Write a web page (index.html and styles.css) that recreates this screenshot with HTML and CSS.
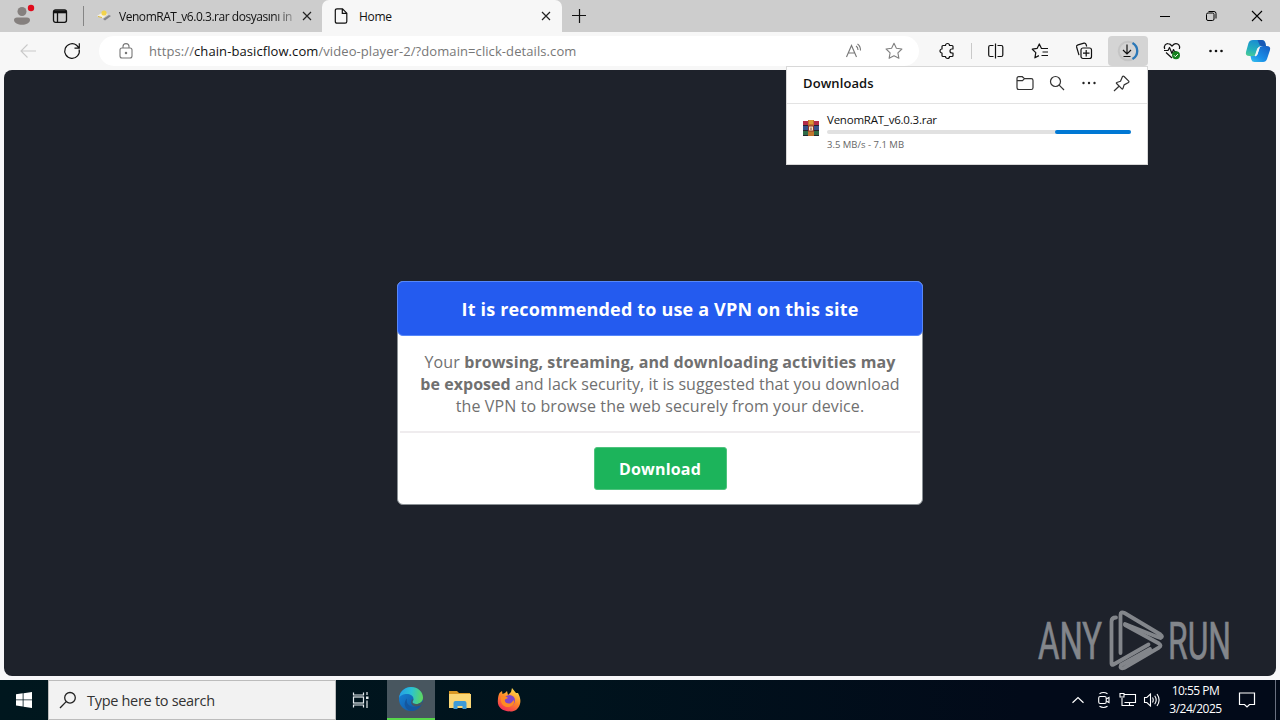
FILE: index.html
```html
<!DOCTYPE html>
<html lang="en">
  <head>
    <meta charset="UTF-8" />
    <meta name="viewport" content="width=device-width, initial-scale=1.0" />
    <title>Home</title>
    <link rel="stylesheet" href="styles.css">
  </head>
  <body>
    <!-- Browser tabs -->
    <div class="tab-bar">
      <div class="profile">
        <svg width="26" height="26" viewBox="0 0 26 26">
          <circle cx="13" cy="8.500" r="4.500" fill="#85807e" />
          <path d="M5 17q0-2.500 3-2.500h10q3 0 3 2.500c0 3-4 4.800-8 4.800S5 20 5 17z" fill="#85807e" />
          <circle cx="22" cy="5" r="3.200" fill="#e00b1c" />
        </svg>
      </div>
      <div class="workspaces">
        <svg width="16" height="16" viewBox="0 0 16 16" fill="none" stroke="#111" stroke-width="1.300">
          <rect x="1.500" y="1.800" width="13" height="12.500" rx="2" />
          <path d="M2 3.800h12" stroke-width="3" />
          <path d="M5.500 4v10" />
        </svg>
      </div>
      <div class="tab">
        <svg class="favicon" width="14" height="14" viewBox="0 0 14 14">
          <path d="M0 7l6-4 5 2-5 4z" fill="#f4f1e6" />
          <circle cx="7" cy="4" r="2.600" fill="#f2d34c" />
          <path d="M6 10l6-4 2 1-6 4.500z" fill="#85858c" />
          <path d="M1 7.500l4 1" stroke="#dcb93c" />
        </svg>
        <span class="tab-title fade">VenomRAT_v6.0.3.rar dosyasını in</span>
        <svg class="close" width="10" height="10" viewBox="0 0 10 10"><path d="M1 1l8 8M9 1L1 9" stroke="#222" stroke-width="1.200" /></svg>
      </div>
      <div class="tab active">
        <svg class="favicon" width="14" height="16" viewBox="0 0 14 16" fill="none" stroke="#111" stroke-width="1.200">
          <path d="M3 .8h5.500l4.300 4.400v8.300q0 1.700-1.700 1.700H3q-1.700 0-1.700-1.700v-11Q1.300.8 3 .8zM8.300 1v4.400h4.400" />
        </svg>
        <span class="tab-title home">Home</span>
        <svg class="close" width="10" height="10" viewBox="0 0 10 10"><path d="M1 1l8 8M9 1L1 9" stroke="#222" stroke-width="1.200" /></svg>
      </div>
      <svg class="new-tab" width="14" height="14" viewBox="0 0 14 14"><path d="M0 6.500h14M7.500 0v14" stroke="#111" stroke-width="1.200" /></svg>
      <div class="window-controls">
        <span><svg width="12" height="12" viewBox="0 0 12 12"><path d="M1 6.500h10" stroke="#000" /></svg></span>
        <span><svg width="12" height="12" viewBox="0 0 12 12" fill="none" stroke="#000"><rect x="1.500" y="3" width="7.500" height="7.500" rx="1.500" /><path d="M3.500 1.500H9q2 0 2 2v5" /></svg></span>
        <span><svg width="12" height="12" viewBox="0 0 12 12"><path d="M1 1l10 10M11 1L1 11" stroke="#000" stroke-width="1.100" /></svg></span>
      </div>
    </div>

    <!-- Address bar and toolbar buttons -->
    <div class="toolbar">
      <div class="nav-btn back"><svg width="16" height="14" viewBox="0 0 16 14" fill="none" stroke="#c9c9c9" stroke-width="1.100"><path d="M16 7H1M7.500.5L1 7l6.500 6.500" /></svg></div>
      <div class="nav-btn"><svg width="18" height="18" viewBox="0 0 18 18" fill="none" stroke="#111" stroke-width="1.200"><path d="M16.200 7.500A7.300 7.300 0 1 1 13.600 3.300L16 5.800M16.300 1.300v4.800h-4.800" /></svg></div>
      <div class="address">
        <svg class="lock" width="14" height="16" viewBox="0 0 14 16" fill="none" stroke="#777" stroke-width="1.100"><rect x="1" y="5" width="12" height="10" rx="2" /><path d="M4 5V3.600a3 3 0 0 1 6 0V5" /><circle cx="7" cy="10" r=".7" fill="#666" /></svg>
        <span class="url">https://<b>chain-basicflow.com</b>/video-player-2/?domain=click-details.com</span>
        <svg class="read" width="18" height="16" viewBox="0 0 18 16" fill="none" stroke="#777" stroke-width="1.100"><path d="M2.500 14L7.500 2.500 12.500 14M4.200 10h6.600M12 3q2 1.200 2 4M13.500 1q3 2 3 6.500" /></svg>
        <svg class="star" width="18" height="18" viewBox="0 0 18 18" fill="none" stroke="#808080" stroke-width="1.100" stroke-linejoin="round"><path d="M9 1.200l2.400 5 5.500.8-4 3.800 1 5.500L9 13.700l-4.900 2.600 1-5.500-4-3.800 5.500-.8z" /></svg>
      </div>
      <div class="tool ext"><svg width="18" height="18" viewBox="0 0 18 18" fill="none" stroke="#111" stroke-width="1.200" stroke-linejoin="round"><path d="M5 3.500h2.500a2 2 0 0 1 4 0H14q1 0 1 1V7h-1a2 2 0 0 0 0 4h1v2.500q0 1-1 1h-2.500a2 2 0 0 1-4 0H5q-1 0-1-1V11a2 2 0 0 1 0-4V4.500q0-1 1-1z" /></svg></div>
      <div class="separator"></div>
      <div class="tool"><svg width="18" height="16" viewBox="0 0 18 16" fill="none" stroke="#111" stroke-width="1.200"><path d="M6.500 2.500H3.200Q1.700 2.500 1.700 4v8q0 1.500 1.500 1.500h3.300M10.500 2.500h3.800q1.500 0 1.500 1.500v8q0 1.500-1.500 1.500h-3.800M8.500 .5v15" /></svg></div>
      <div class="tool"><svg width="18" height="18" viewBox="0 0 18 18" fill="none" stroke="#111" stroke-width="1.200" stroke-linejoin="round"><path d="M17 6.500h-6.500L8.300 1.900 6.100 6.400l-4.800.8 3.500 3.400-.9 5.200 4-2.200M11.500 10H17M10.500 13.500H17" /></svg></div>
      <div class="tool"><svg width="18" height="18" viewBox="0 0 18 18" fill="none" stroke="#111" stroke-width="1.200"><path d="M4 13.200L1.600 5Q1.200 3.300 3 2.800l6-1.600q1.500-.4 2 1.100l.7 2.200" /><rect x="6" y="6" width="10.500" height="10.500" rx="2" /><path d="M11.200 8v6.500M8 11.200h6.500" /></svg></div>
      <div class="tool pressed"><svg width="24" height="22" viewBox="0 0 24 22" fill="none" stroke="#111" stroke-width="1.200"><circle cx="12" cy="11" r="9.300" stroke="#c5c5c5" stroke-width="2" /><path d="M16.500 2.900a9.300 9.300 0 0 1 0 16.200" stroke="#2b78b8" stroke-width="2.300" /><path d="M11 4.500v9M7 10l4 4 4-4M7.500 16.500h7" /></svg></div>
      <div class="tool"><svg width="18" height="18" viewBox="0 0 18 18" fill="none" stroke="#111" stroke-width="1.200" stroke-linejoin="round"><path d="M1.700 7C.5 3.500 3 1.500 5.200 1.700 7 1.800 8 3 9 4c1-1 2-2.200 3.800-2.300C15.500 1.600 17.500 4 16.300 7M1 8.500h4l1.500-3 2.500 6 1.500-4 1 2h2M3 10.500L9 16" /><circle cx="13" cy="13.300" r="4" fill="#16821f" stroke="none" /><path d="M11 13.300l1.400 1.400 2.500-2.600" stroke="#fff" stroke-width="1" /></svg></div>
      <div class="tool"><svg width="16" height="4" viewBox="0 0 16 4" fill="#111"><circle cx="2.500" cy="2" r="1.300" /><circle cx="8" cy="2" r="1.300" /><circle cx="13.500" cy="2" r="1.300" /></svg></div>
      <div class="tool copilot">
        <svg width="26" height="24" viewBox="0 0 26 24">
          <defs>
            <linearGradient id="cpA" x1=".3" y1="0" x2="0" y2="1"><stop offset="0" stop-color="#1a8fd0" /><stop offset=".55" stop-color="#24b0bd" /><stop offset="1" stop-color="#4fce90" /></linearGradient>
            <linearGradient id="cpB" x1="0" y1="1" x2=".9" y2="0"><stop offset="0" stop-color="#38c4ec" /><stop offset=".4" stop-color="#1a8fe8" /><stop offset="1" stop-color="#1660c4" /></linearGradient>
          </defs>
          <path d="M8 1h9q2.500 0 3.200 2.500L21 7h-5q-2.200 0-3 2.500l-2 6Q10.300 17 8 17H4.500q-4.500 0-3.500-4l2.500-9Q4.500 1 8 1z" fill="url(#cpA)" />
          <path d="M18 23H9.500q-2.500 0-3.200-2.500L5.500 17H9q2.800 0 3.600-2.500l2-6Q15.300 7 18 7h3.500q4.500 0 3.500 4l-3 9q-1 3-4 3z" fill="url(#cpB)" />
          <path d="M12.500 1H17q2.500 0 3.200 2.500L21 7h-4.500q-2 0-2.500-2.500z" fill="#1859b5" />
          <path d="M14.300 8.500L12 15.500q-.5 1.200-1.700 1.400l2.300-7q.5-1.200 1.700-1.400z" fill="#f7f7f7" stroke="#f7f7f7" />
        </svg>
      </div>
    </div>

    <!-- Site content -->
    <div class="page">
      <div class="modal">
        <h2>It is recommended to use a VPN on this site</h2>
        <p>
          <span class="line one">Your <strong>browsing, streaming, and downloading activities may</strong></span>
          <span class="line two"><strong>be exposed</strong> and lack security, it is suggested that you download</span>
          <span class="line three">the VPN to browse the web securely from your device.</span>
        </p>
        <div class="modal-footer">
          <button>Download</button>
        </div>
      </div>
      <svg class="watermark" width="204" height="66" viewBox="0 0 204 66">
        <g fill="#83868b" stroke="#83868b" stroke-width=".7" font-family="Roboto, sans-serif" font-size="52">
          <text x="2" y="49.500" textLength="64" lengthAdjust="spacingAndGlyphs">ANY</text>
          <text x="132" y="49.500" textLength="63" lengthAdjust="spacingAndGlyphs">RUN</text>
        </g>
        <g fill="none" stroke="#83868b" stroke-width="3.800" stroke-linejoin="round" stroke-linecap="round">
          <path d="M80 8.500q-4.500 0-4.500 4v42q0 2 2 1l35-20" />
          <path d="M84.500 44V6q0-4 4-2l36 21.500q3 2 0 3.500l-3-1L89 15" />
          <path d="M89 16l34 18.500q3 2 0 4L88 59q-3 1-3.500-1l.5-2 29-16" />
        </g>
      </svg>
    </div>

    <!-- Downloads flyout -->
    <div class="downloads">
      <div class="downloads-header">
        <h3>Downloads</h3>
        <svg class="i-folder" width="18" height="16" viewBox="0 0 18 16" fill="none" stroke="#333" stroke-width="1.200"><path d="M1 12.500v-9Q1 1.700 2.800 1.700h3.500L8.500 3.600h6.700Q17 3.600 17 5.400v7.300q0 1.800-1.800 1.800H2.800Q1 14.500 1 12.500zM1 5.700h5.500l2-2" /></svg>
        <svg class="i-search" width="16" height="16" viewBox="0 0 16 16" fill="none" stroke="#333" stroke-width="1.200"><circle cx="6.500" cy="6.500" r="5" /><path d="M10.200 10.200L15 15" /></svg>
        <svg class="i-more" width="16" height="4" viewBox="0 0 16 4" fill="#222"><circle cx="2.500" cy="2" r="1.200" /><circle cx="8" cy="2" r="1.200" /><circle cx="13.500" cy="2" r="1.200" /></svg>
        <svg class="i-pin" width="17" height="17" viewBox="0 0 17 17" fill="none" stroke="#333" stroke-width="1.200" stroke-linejoin="round"><path d="M9.500 1.500q.8-.8 1.600 0l4.400 4.400q.8.800 0 1.600l-4.400 2.400-1.200 3.700q-.4.800-1 .2L3.600 8.500q-.6-.6.200-1l3.700-1.200zM6 11.200L1 16" /></svg>
      </div>
      <div class="download-item">
        <svg width="16" height="16" viewBox="0 0 16 16">
          <rect y="1" width="16" height="4" fill="#b32c49" /><rect y="6" width="16" height="4" fill="#36528a" /><rect y="11" width="16" height="4" fill="#2f6b48" />
          <path d="M0 5.500h16M0 10.500h16M0 15.500h16" stroke="#26242e" />
          <rect x="5" y="0" width="6" height="16" fill="#c2742c" />
          <path d="M6 1h4M6 3h4" stroke="#f0c040" />
          <rect x="5" y="5.500" width="6" height="6" fill="#8a3330" /><rect x="6" y="6.500" width="4" height="4" fill="#f8e8b8" /><path d="M8 7.500v2.500" stroke="#75313c" />
        </svg>
        <div class="download-info">
          <div class="filename">VenomRAT_v6.0.3.rar</div>
          <div class="progress"><div class="progress-chunk"></div></div>
          <div class="speed">3.5 MB/s - 7.1 MB</div>
        </div>
      </div>
    </div>

    <!-- Windows taskbar -->
    <div class="taskbar">
      <div class="start"><svg width="16" height="16" viewBox="0 0 16 16" fill="#fff"><path d="M0 2.300L6.700 1.300v6.200H0zM7.500 1.200L16 0v7.500H7.500zM0 8.300h6.700v6.200L0 13.600zM7.500 8.300H16V16l-8.500-1.300z" /></svg></div>
      <div class="search">
        <svg width="18" height="18" viewBox="0 0 18 18" fill="none" stroke="#222" stroke-width="1.300"><circle cx="11" cy="6.800" r="5.300" /><path d="M7.200 10.600L1 17" /></svg>
        <span>Type here to search</span>
      </div>
      <div class="task view"><svg width="18" height="18" viewBox="0 0 18 18" fill="none" stroke="#e5ecef" stroke-width="1.200"><path d="M1.500 1.500V4h10V1.500M1.500 16.500V14h10v2.500M15 1v3M15 9.500V17" /><rect x="1.500" y="6" width="10" height="6" /><rect x="14" y="5.500" width="2.500" height="2.500" fill="#e5ecef" stroke="none" /></svg></div>
      <div class="task edge">
        <svg width="26" height="26" viewBox="0 0 26 26">
          <defs>
            <linearGradient id="edA" x1="0" y1=".4" x2="1" y2=".5"><stop offset="0" stop-color="#259ee7" /><stop offset=".5" stop-color="#2bc2d2" /><stop offset="1" stop-color="#5fd85c" /></linearGradient>
            <linearGradient id="edB" x1="0" y1="0" x2="1" y2="1"><stop offset="0" stop-color="#1687dd" /><stop offset="1" stop-color="#114f98" /></linearGradient>
          </defs>
          <circle cx="13" cy="13" r="12" fill="url(#edB)" />
          <path d="M1 12C2 5 7 1 13 1c7 0 12 5 12 10.500 0 4-3 6.500-7 6.500-3 0-4-1-3.500-2.200.3-.8 1-1.300 1-2.800C15.500 9 11 7.500 7.500 8 4 8.400 2 10 1 12z" fill="url(#edA)" />
          <path d="M9 12.500c-1.500 6 4 9 8 8.500 2.500-.2 4.500-1.500 6-2.500-2 4-6 6.500-10 6.500-4-1-7.500-5-6-9 .4-1.500 1-2.500 2-3.500z" fill="#15579f" />
          <path d="M15.400 13.500c-.2 1-1 1.500-1 2.300 0 1.500 1.600 2.200 3.600 2.200 2.500 0 4.500-.8 5.600-2.300l.8 1.600q-.5 1.500-2.200 2.300c-6 2.500-11-1.100-8.200-6z" fill="#48565f" />
        </svg>
      </div>
      <div class="task"><svg width="24" height="22" viewBox="0 0 24 22"><path d="M1 2h8l2 2h11v5H1z" fill="#d99824" /><path d="M1 5h22v14H1z" fill="#fad675" /><path d="M5.500 20v-6q0-2 2-2h9q2 0 2 2v6h-4v-3h-5v3z" fill="#3d9bd8" /></svg></div>
      <div class="task">
        <svg width="26" height="26" viewBox="0 0 26 26">
          <defs><linearGradient id="ff" x1=".8" y1="0" x2=".3" y2="1"><stop offset="0" stop-color="#ffe350" /><stop offset=".5" stop-color="#ff8a28" /><stop offset="1" stop-color="#f22c58" /></linearGradient></defs>
          <path d="M3.500 6L6 4l.5 3L9 6l2-2 1 4 3-3 1-4 4 5 2 0c2 4 3 7 2 11-1.400 5-5 7.500-9.500 7.500C6 24.500 1.500 20 1.800 14 2 10 2.500 8 3.500 6z" fill="url(#ff)" />
          <circle cx="13.500" cy="13.500" r="5.500" fill="#8246c8" />
          <path d="M5 10c3-1 5-1 7 1l-3 1.500c-1 3 3 5 6 3.500l3-3c1 4-2 7-6 7-5 0-8-4-7-10z" fill="#ff8b23" />
        </svg>
      </div>
      <div class="tray">
        <svg class="chevron" width="14" height="8" viewBox="0 0 14 8" fill="none" stroke="#fff" stroke-width="1.200"><path d="M1.500 6.800L7 1.500l5.500 5.300" /></svg>
        <svg class="meet" width="14" height="18" viewBox="0 0 14 18" fill="none" stroke="#fff" stroke-width="1.100"><rect x="1.700" y="5.500" width="7.500" height="7" rx="1.500" /><path d="M9.200 8l2.800-1.500v5L9.200 10M2.500 2.800q4-2.500 8 0M2.500 15.200q4 2.500 8 0" /></svg>
        <svg class="network" width="18" height="16" viewBox="0 0 18 16" fill="none" stroke="#fff" stroke-width="1.100"><path d="M5.500 2.500h11v8h-11M10.500 10.500v3M6 13.500h9M3 6v7.500h4M1 1.500v3.500h4V1.500z" /></svg>
        <svg class="volume" width="18" height="16" viewBox="0 0 18 16" fill="none" stroke="#fff" stroke-width="1.100"><path d="M1.500 5.500h2.300L7.500 2v12L3.800 10.500H1.500zM9.500 5.500q1.500 2.500 0 5M11.700 3.800q3 4.200 0 8.400M14 2q4.200 6 0 12" /></svg>
        <div class="clock"><div>10:55 PM</div><div>3/24/2025</div></div>
        <svg class="notify" width="18" height="18" viewBox="0 0 18 18" fill="none" stroke="#fff" stroke-width="1.200"><path d="M1.500 2h15v11.500h-5L9 16l-2.500-2.500h-5z" /></svg>
        <div class="show-desktop"></div>
      </div>
    </div>
  </body>
</html>
```
FILE: styles.css
```css
* {
  box-sizing: border-box;
}
body {
  margin: 0;
  width: 1280px;
  height: 720px;
  overflow: hidden;
  position: relative;
  background: #f7f7f9;
  font-family: "Open Sans", "Noto Sans", sans-serif;
  color: #111;
}
svg {
  display: block;
  flex: none;
}

/* tabs */
.tab-bar {
  display: flex;
  align-items: center;
  height: 32px;
  background: #cdcdcd;
}
.profile {
  width: 44px;
  padding-left: 9px;
}
.workspaces {
  display: flex;
  justify-content: center;
  width: 40px;
  height: 20px;
  align-items: center;
  padding-right: 8px;
  border-right: 1px solid #858585;
}
.tab {
  display: flex;
  align-items: center;
  width: 238px;
  height: 32px;
  padding: 0 10px 0 13px;
  font-size: 12px;
  white-space: nowrap;
}
.tab.active {
  width: 240px;
  padding: 0 11px 0 12px;
  background: #f7f7f7;
  border-radius: 7px 7px 0 0;
}
.favicon {
  margin-right: 8px;
}
.active .favicon {
  margin-right: 11px;
}
.tab-title {
  flex: 1;
  letter-spacing: -0.46px;
}
.tab-title.home {
  letter-spacing: -0.3px;
}
.fade {
  -webkit-mask-image: linear-gradient(to right, #000 155px, transparent 182px);
  mask-image: linear-gradient(to right, #000 155px, transparent 182px);
}
.new-tab {
  margin-left: 10px;
}
.window-controls {
  display: flex;
  margin-left: auto;
}
.window-controls span {
  display: flex;
  justify-content: center;
  width: 46px;
}

/* toolbar */
.toolbar {
  display: flex;
  align-items: center;
  height: 38px;
  background: #f7f7f7;
}
.nav-btn {
  display: flex;
  justify-content: center;
  width: 44px;
}
.nav-btn.back {
  margin-left: 6px;
}
.address {
  display: flex;
  align-items: center;
  width: 820px;
  height: 30px;
  margin-left: 5px;
  padding: 0 16px 0 20px;
  border-radius: 15px;
  background: #fff;
}
.url {
  margin-left: 16px;
  flex: 1;
  font-size: 13px;
  letter-spacing: 0.085px;
  color: #777;
  white-space: nowrap;
}
.url b {
  font-weight: normal;
  color: #111;
}
.star {
  margin-left: 23px;
}
.tool {
  display: flex;
  justify-content: center;
  align-items: center;
  width: 44px;
  height: 30px;
}
.tool.ext {
  width: 40px;
  margin-left: 8px;
}
.separator {
  width: 1px;
  height: 16px;
  margin: 0 2px 0 4px;
  background: #c9c9c9;
}
.tool.pressed {
  width: 40px;
  margin: 0 2px;
  background: #d4d4d4;
  border-radius: 4px;
}
.tool.copilot {
  width: 40px;
}

/* page */
.page {
  position: relative;
  display: flex;
  justify-content: center;
  height: 606px;
  margin: 0 4px;
  padding: 211px 0 0 40px;
  background: #1e222b;
  border-radius: 8px;
}
.modal {
  width: 526px;
  height: 224px;
  border: 1px solid #8b9195;
  border-radius: 6px;
  background: #fff;
}
.modal h2 {
  margin: -1px -1px 0;
  height: 55px;
  background: #245bef;
  border: 1px solid #5687fa;
  border-radius: 6px;
  line-height: 54px;
  color: #fff;
  font-size: 18px;
  letter-spacing: 0.17px;
  text-align: center;
}
.modal p {
  margin: 0 2px;
  padding: 15px 0 14px;
  height: 97px;
  border-bottom: 2px solid #efecee;
  color: #707070;
  font-size: 16px;
  line-height: 22px;
  text-align: center;
}
.line {
  display: block;
  white-space: nowrap;
  letter-spacing: 0.11px;
}
.line.two {
  letter-spacing: 0.05px;
}
.modal-footer {
  display: flex;
  justify-content: center;
  padding-top: 14px;
}
.modal button {
  width: 133px;
  height: 43px;
  border: 1px solid #4fc37e;
  border-radius: 3px;
  background: #1cb45b;
  color: #fff;
  font-family: inherit;
  font-size: 16px;
  font-weight: bold;
  letter-spacing: 0.2px;
}
.watermark {
  position: absolute;
  right: 36px;
  bottom: 1px;
}

/* downloads flyout */
.downloads {
  position: absolute;
  left: 786px;
  top: 66px;
  width: 362px;
  height: 99px;
  background: #fff;
  border: 1px solid #d8d8d8;
}
.downloads-header {
  display: flex;
  align-items: center;
  height: 37px;
  padding: 0 17px 4px 16px;
  border-bottom: 1px solid #e3e3e3;
}
.downloads h3 {
  margin: 0;
  flex: 1;
  font-size: 13px;
  font-weight: 600;
  letter-spacing: 0.1px;
}
.i-search {
  margin-left: 15px;
}
.i-more {
  margin-left: 16px;
}
.i-pin {
  margin-left: 16px;
}
.download-item {
  display: flex;
  padding: 8px 16px 0;
}
.download-item > svg {
  margin-top: 8px;
}
.download-info {
  flex: 1;
  margin-left: 8px;
}
.filename {
  font-size: 11.5px;
  line-height: 16px;
  letter-spacing: -0.22px;
}
.progress {
  height: 4px;
  margin-top: 2px;
  border-radius: 2px;
  background: #e1e1e1;
}
.progress-chunk {
  width: 25%;
  height: 4px;
  margin-left: auto;
  border-radius: 2px;
  background: #0078d4;
}
.speed {
  margin-top: 4px;
  font-size: 9.5px;
  line-height: 13px;
  color: #666;
}

/* taskbar */
.taskbar {
  display: flex;
  height: 40px;
  margin-top: 4px;
  background: linear-gradient(to right, #00171e, #00131d 45%, #020a19 80%);
}
.start {
  display: flex;
  width: 48px;
  align-items: center;
  justify-content: center;
}
.search {
  display: flex;
  align-items: center;
  width: 288px;
  padding-left: 10px;
  background: #f2f2f2;
  border: 1px solid #bcbcbc;
  color: #333;
  font-size: 14.5px;
  letter-spacing: -0.3px;
}
.search span {
  margin-left: 10px;
}
.task {
  display: flex;
  width: 49px;
  align-items: center;
  justify-content: center;
}
.edge {
  background: #48565f;
  border-bottom: 2px solid #57d74b;
  width: 48px;
  margin-left: 2px;
}
.tray {
  display: flex;
  align-items: center;
  margin-left: auto;
  color: #fff;
}
.chevron {
  margin-right: 1px;
}
.meet {
  margin-left: 11px;
}
.network {
  margin-left: 8px;
}
.volume {
  margin-left: 6px;
}
.clock {
  width: 69px;
  font-size: 12px;
  letter-spacing: -0.5px;
  line-height: 18px;
  text-align: center;
  white-space: nowrap;
}
.notify {
  margin-left: 8px;
}
.show-desktop {
  width: 5px;
  height: 40px;
  margin-left: 19px;
  border-left: 1px solid #697080;
}
```
